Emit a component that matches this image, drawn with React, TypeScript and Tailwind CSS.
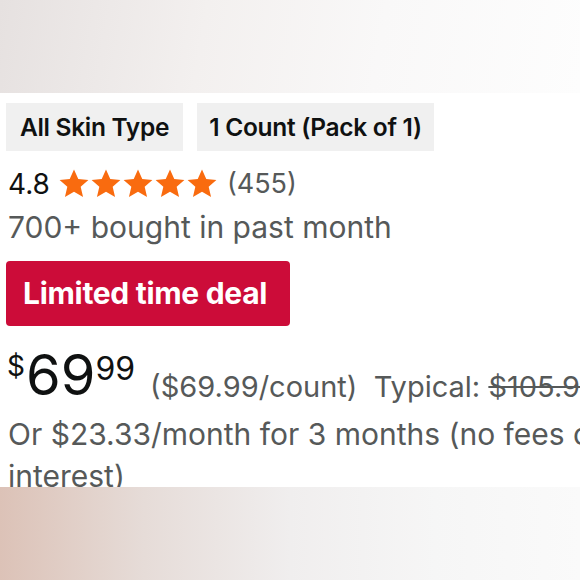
function Stars() {
  return (
    <div className="flex items-center">
      {[0, 1, 2, 3, 4].map((i) => (
        <svg key={i} viewBox="0 0 24 24" className="w-[32px] h-[32px]">
          <path
            d="M12 1.2l3.2 7.1 7.6.7-5.8 5.1 1.8 7.6L12 17.8l-6.8 3.9 1.8-7.6-5.8-5.1 7.6-.7z"
            fill="#f96b0f"
          />
        </svg>
      ))}
    </div>
  )
}

export default function App() {
  return (
    <div className="w-[580px] h-[580px] overflow-hidden bg-white font-['Inter',sans-serif] flex flex-col">
      {/* top blur band */}
      <div className="h-[93px] shrink-0 bg-[linear-gradient(100deg,#e6e1e0_0%,#f3f0ef_35%,#f9f8f8_65%,#fdfdfd_100%)]" />

      {/* content is wider than the crop, like the screenshot */}
      <div className="h-[394px] w-[640px] shrink-0 overflow-hidden pl-[6px] pt-[10px]">
        <div className="flex gap-[14px]">
          <div className="h-[48px] w-[177px] bg-[#f0f0f0] flex items-center justify-center text-[24.5px] font-semibold text-[#0f1111] tracking-[-0.3px]">
            All Skin Type
          </div>
          <div className="h-[48px] w-[237px] bg-[#f0f0f0] flex items-center justify-center text-[24.5px] font-semibold text-[#0f1111] tracking-[-0.3px]">
            1 Count (Pack of 1)
          </div>
        </div>

        <div className="flex items-center mt-[17px] pl-[2px] h-[32px]">
          <span className="text-[28px] text-[#0f1111] mr-[8px]">4.8</span>
          <Stars />
          <span className="text-[27px] text-[#565959] ml-[9px]">(455)</span>
        </div>

        <div className="pl-[2px] mt-[9px] text-[30px] leading-[36px] text-[#565959]">
          700+ bought in past month
        </div>

        <div className="mt-[16px] w-[284px] h-[65px] rounded-[4px] bg-[#cc0c39] flex items-center pl-[17px] text-white text-[30px] font-bold tracking-[-0.3px]">
          Limited time deal
        </div>

        <div className="flex items-end mt-[21px] pl-[1px] whitespace-nowrap text-[#0f1111]">
          <div className="flex items-start">
            <span className="text-[28px] leading-none mt-[5px] mr-[1px]">$</span>
            <span className="text-[56px] leading-none">69</span>
            <span className="text-[32px] leading-none mt-[6px]">99</span>
          </div>
          <div className="ml-[15px] text-[29px] leading-none mb-[2px] text-[#565959]">
            ($69.99/count)&nbsp;&nbsp;Typical: <span className="line-through">$105.99</span>
          </div>
        </div>

        <div className="pl-[2px] mt-[10px] text-[30px] leading-[42px] text-[#565959] w-[610px]">
          Or $23.33/month for 3 months (no fees or interest)
        </div>
      </div>

      {/* bottom blur band */}
      <div className="flex-1 bg-[linear-gradient(90deg,#dcc2b7_0%,#e6dcd8_25%,#f0eeee_50%,#f6f6f6_75%,#fafafa_100%)]" />
    </div>
  )
}
